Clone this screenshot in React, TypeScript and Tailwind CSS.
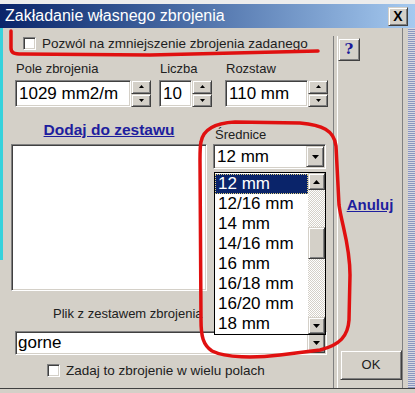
import React from "react";

const sunken =
  "border border-t-[#808080] border-l-[#808080] border-b-white border-r-white shadow-[inset_1px_1px_0_#404040,inset_-1px_-1px_0_#d4d0c8]";
const raised =
  "border border-t-[#d4d0c8] border-l-[#d4d0c8] border-b-[#404040] border-r-[#404040] shadow-[inset_1px_1px_0_#ffffff,inset_-1px_-1px_0_#808080]";
const dither =
  "bg-[repeating-conic-gradient(#d4d0c8_0%_25%,#ffffff_0%_50%)] bg-[length:2px_2px]";

function Arrow({ up, w = 7 }: { up?: boolean; w?: number }) {
  const h = Math.ceil(w / 2);
  return (
    <svg width={w} height={h} viewBox={`0 0 ${w} ${h}`}>
      <polygon
        points={up ? `0,${h} ${w},${h} ${w / 2},0` : `0,0 ${w},0 ${w / 2},${h}`}
        fill="#000"
      />
    </svg>
  );
}

function Spinner() {
  return (
    <div className="flex w-[20px] flex-col">
      <div className={`${raised} flex flex-1 items-center justify-center bg-[#d4d0c8]`}>
        <Arrow up w={5} />
      </div>
      <div className={`${raised} flex flex-1 items-center justify-center bg-[#d4d0c8]`}>
        <Arrow w={5} />
      </div>
    </div>
  );
}

function Field({ label, value, width, className }: { label: string; value: string; width: string; className: string }) {
  return (
    <div className={`flex flex-col ${className}`}>
      <span className="h-[15px] pl-[1px] text-[13px] leading-[15px] text-[#202020]">{label}</span>
      <div className="mt-[4px] flex h-[27px]">
        <div className={`${sunken} ${width} flex items-center bg-white pl-[3px] text-[17px]`}>{value}</div>
        <Spinner />
      </div>
    </div>
  );
}

function Check() {
  return <div className={`${sunken} h-[13px] w-[13px] bg-white`} />;
}

const sizes = ["12 mm", "12/16 mm", "14 mm", "14/16 mm", "16 mm", "16/18 mm", "16/20 mm", "18 mm"];

export default function App() {
  return (
    <div className="relative flex h-[393px] w-[415px] flex-col overflow-hidden bg-[#d4d0c8] font-['Liberation_Sans',Arial,sans-serif] text-black">
      <div className="h-[4px] bg-[#ececec]" />
      <div className="flex h-[24px] items-center bg-linear-to-r from-[#0a246a] to-[#a6caf0] pl-[5px] pr-[7px]">
        <span className="flex-1 text-[16px] leading-[24px] text-white">Zakładanie własnego zbrojenia</span>
        <div className={`${raised} flex h-[19px] w-[20px] items-center justify-center bg-[#d4d0c8] text-[14px] font-bold`}>
          X
        </div>
      </div>

      <div className="flex flex-1">
        <div className="flex w-[3px] flex-col">
          <div className="h-[232px] bg-[#36d2dc]" />
        </div>

        {/* main area */}
        <div className="flex w-[330px] flex-col">
          <div className="mt-[9px] flex h-[13px] items-center pl-[20px]">
            <Check />
            <span className="ml-[6px] text-[13.5px] leading-[15px] text-[#202020]">
              Pozwól na zmniejszenie zbrojenia zadanego
            </span>
          </div>

          <div className="mt-[11px] flex">
            <Field label="Pole zbrojenia" value="1029 mm2/m" width="w-[116px]" className="ml-[12px]" />
            <Field label="Liczba" value="10" width="w-[33px]" className="ml-[8px]" />
            <Field label="Rozstaw" value="110 mm" width="w-[83px]" className="ml-[13px]" />
          </div>

          <div className="mt-[8px] flex">
            <div className="ml-[8px] flex w-[196px] flex-col">
              <div className="flex h-[29px] items-center justify-center">
                <span className="text-[15.5px] font-bold text-[#1e1e9e] underline">Dodaj do zestawu</span>
              </div>
              <div className={`${sunken} h-[147px] bg-white`} />
            </div>
            <div className="ml-[6px] flex w-[113px] flex-col">
              <span className="mt-[12px] h-[15px] pl-[2px] text-[13px] leading-[15px] text-[#202020]">Średnice</span>
              <div className={`${sunken} mt-[2px] flex h-[25px] items-center bg-white pl-[3px]`}>
                <span className="flex-1 text-[17px]">12 mm</span>
                <div className={`${raised} mr-[1px] flex h-[21px] w-[18px] items-center justify-center bg-[#d4d0c8]`}>
                  <Arrow w={7} />
                </div>
              </div>
            </div>
          </div>

          <span className="mt-[15px] h-[15px] pl-[50px] text-[13px] leading-[15px] text-[#202020]">
            Plik z zestawem zbrojenia
          </span>
          <div className={`${sunken} ml-[12px] mt-[10px] flex h-[24px] w-[312px] items-center bg-white pl-[2px]`}>
            <span className="flex-1 text-[17px]">gorne</span>
            <div className={`${raised} mr-[1px] flex h-[20px] w-[18px] items-center justify-center bg-[#d4d0c8]`}>
              <Arrow w={7} />
            </div>
          </div>

          <div className="mt-[9px] flex h-[13px] items-center pl-[44px]">
            <Check />
            <span className="ml-[6px] text-[13.5px] leading-[15px] text-[#202020]">Zadaj to zbrojenie w wielu polach</span>
          </div>
        </div>

        {/* divider */}
        <div className="mt-[8px] w-[5px] border-l border-r border-l-[#808080] border-r-white" />

        {/* right panel */}
        <div className="flex w-[65px] flex-col border-r border-r-[#808080] pb-[8px] pt-[10px]">
          <div className={`${raised} flex h-[23px] w-[22px] items-center justify-center bg-[#d4d0c8] font-['DejaVu_Serif',serif] text-[15px] font-bold text-[#1a1a9a]`}>
            ?
          </div>
          <div className="flex flex-1 items-center justify-center">
            <span className="text-[15px] font-bold text-[#1e1e9e] underline">Anuluj</span>
          </div>
          <div className={`${raised} ml-[2px] flex h-[30px] w-[62px] items-center justify-center bg-[#d4d0c8] text-[13px] text-[#202020]`}>
            OK
          </div>
        </div>

        <div className="flex w-[12px]">
          <div className="w-[5px]" />
          <div className="w-[7px] bg-[repeating-linear-gradient(0deg,#8a96c0_0px,#8a96c0_1px,#d8d8e0_1px,#d8d8e0_2px)]" />
        </div>
      </div>
      <div className="h-[5px] border-t border-t-[#404040]" />

      {/* open dropdown list */}
      <div className="absolute left-[214px] top-[172px] flex h-[163px] w-[112px] border border-black bg-white">
        <div className="flex flex-1 flex-col pt-[1px]">
          {sizes.map((s, i) => (
            <div
              key={s}
              className={`flex h-[20px] items-center pl-[3px] text-[17px] ${
                i === 0 ? "bg-[#0a246a] text-white outline-1 outline-dotted outline-[#e0d080] -outline-offset-1" : ""
              }`}
            >
              {s}
            </div>
          ))}
        </div>
        <div className="flex w-[17px] flex-col">
          <div className={`${raised} flex h-[17px] items-center justify-center bg-[#d4d0c8]`}>
            <Arrow up w={7} />
          </div>
          <div className={`h-[37px] ${dither}`} />
          <div className={`${raised} h-[32px] bg-[#d4d0c8]`} />
          <div className={`flex-1 ${dither}`} />
          <div className={`${raised} flex h-[17px] items-center justify-center bg-[#d4d0c8]`}>
            <Arrow w={7} />
          </div>
        </div>
      </div>

      {/* red annotations */}
      <svg className="pointer-events-none absolute left-0 top-0" width="415" height="393" viewBox="0 0 415 393">
        <path
          d="M11 31 L11 48 C11 53 14 54 22 54 L150 55 L318 51"
          fill="none"
          stroke="#e01010"
          strokeWidth="3.5"
          strokeLinecap="round"
        />
        <path
          d="M201 142 C203 130 215 123 235 122 L300 123 C322 125 334 130 336 146 L339 205 C342 226 350 245 350 275 L349 320 C348 336 340 345 320 350 L280 355 C255 358 226 358 212 351 C203 345 201 336 201 320 L200 160 C200 150 200 146 201 142 Z"
          fill="none"
          stroke="#e01010"
          strokeWidth="3.5"
        />
      </svg>
    </div>
  );
}
